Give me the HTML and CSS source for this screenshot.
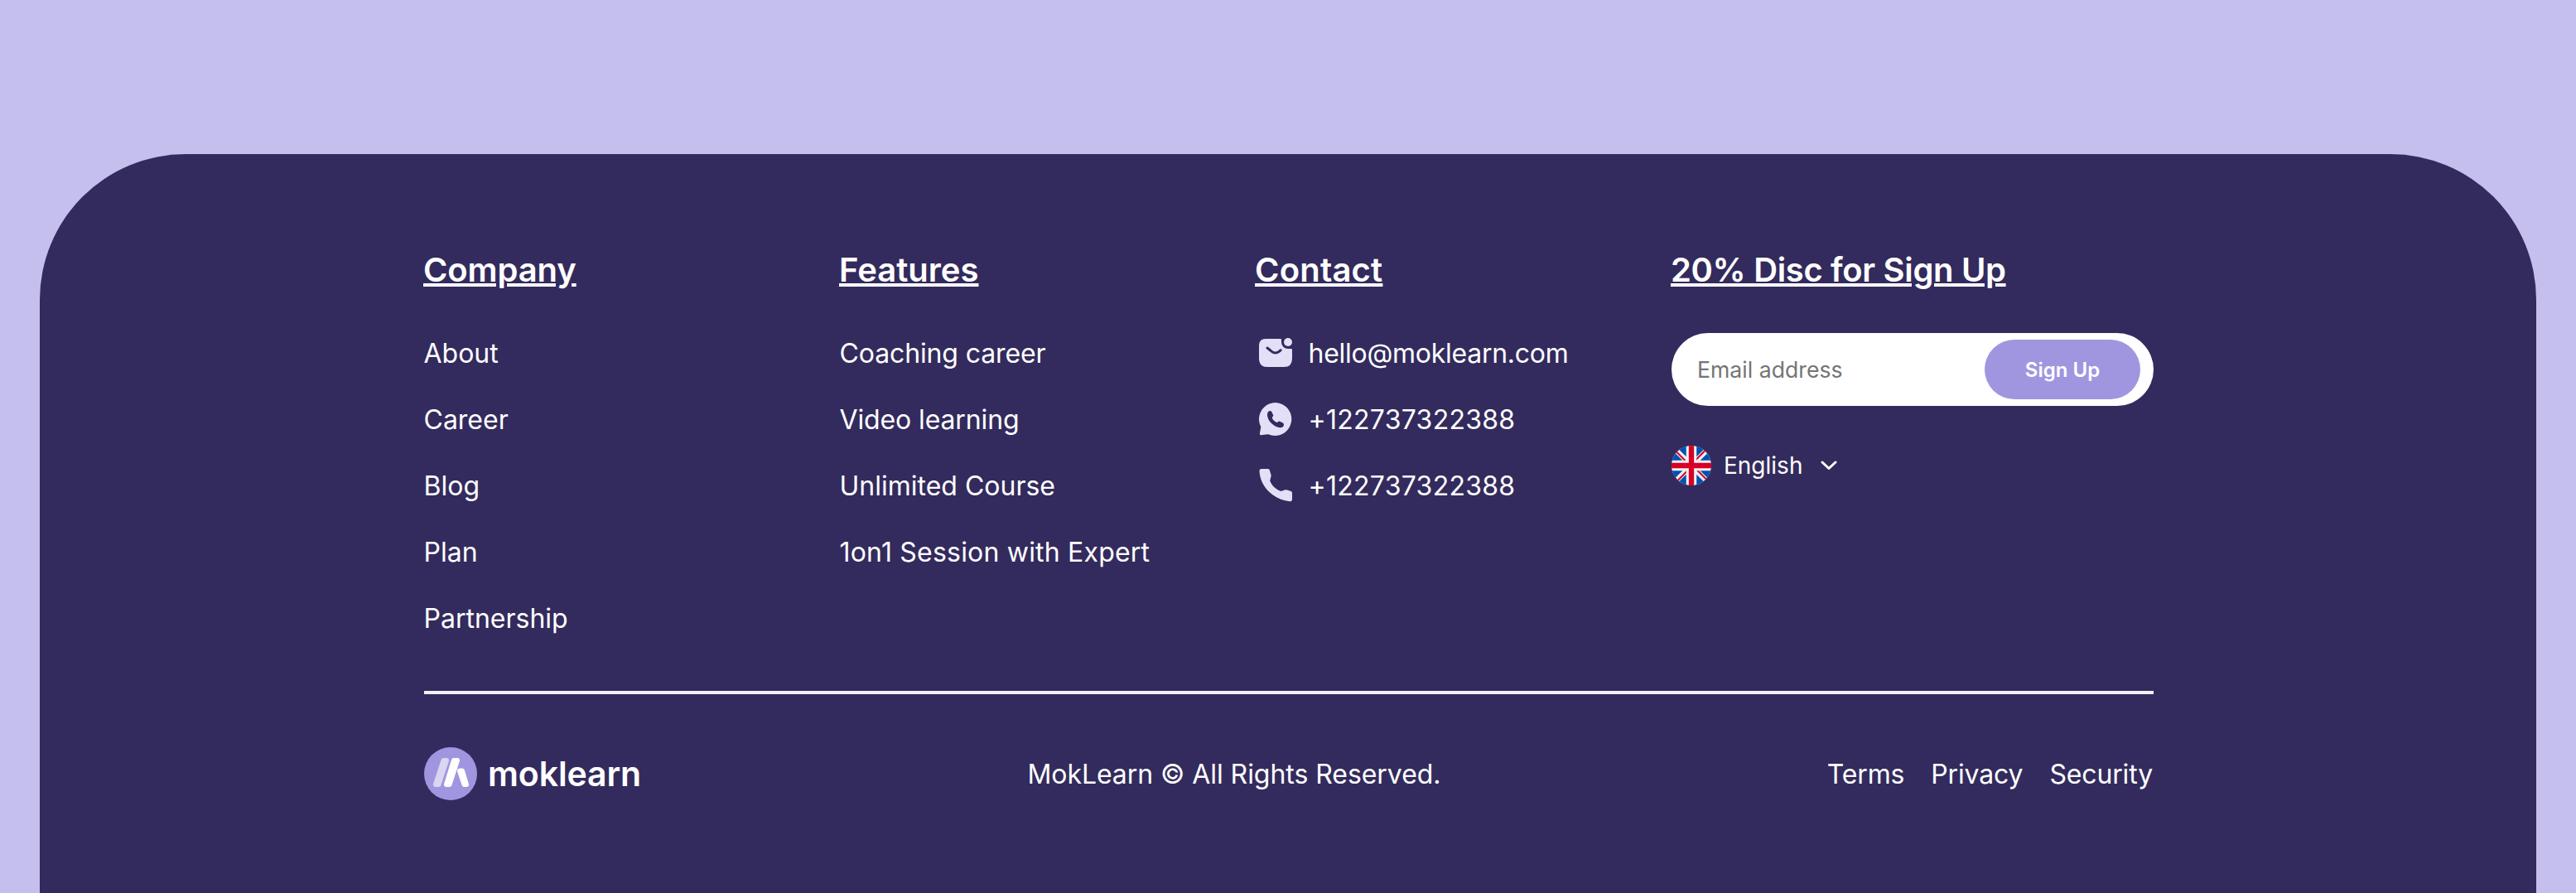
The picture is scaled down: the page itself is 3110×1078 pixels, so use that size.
FILE: index.html
```html
<!DOCTYPE html>
<html lang="en">
<head>
<meta charset="utf-8">
<title>moklearn</title>
<link rel="stylesheet" href="styles.css">
</head>
<body>
<footer class="footer">
  <div class="container">
    <div class="columns">
      <section>
        <h2 class="heading snug">Company</h2>
        <ul class="links">
          <li>About</li>
          <li>Career</li>
          <li>Blog</li>
          <li>Plan</li>
          <li>Partnership</li>
        </ul>
      </section>
      <section>
        <h2 class="heading">Features</h2>
        <ul class="links">
          <li class="snug">Coaching career</li>
          <li class="snug">Video learning</li>
          <li>Unlimited Course</li>
          <li class="loose">1on1 Session with Expert</li>
        </ul>
      </section>
      <section>
        <h2 class="heading loose">Contact</h2>
        <ul class="links">
          <li class="tight">
            <svg class="icon" viewBox="0 0 48 48"><path fill-rule="evenodd" d="M12 7H30.2Q31 7 31 8V11A8 8 0 0 0 39 19H42.6Q44 19 44 20V31Q44 41 34 41H14Q4 41 4 31V15Q4 7 12 7Z"/><circle cx="39" cy="11" r="5"/><path class="icon-cut" d="M14 18L19.8 22.7C21.9 24.4 25.7 24.4 27.8 22.7L30.2 20.8"/></svg>
            hello@moklearn.com
          </li>
          <li class="phone">
            <svg class="icon" viewBox="0 0 48 48"><path fill-rule="evenodd" d="M24 4a20 20 0 1 1-9 38.2L6.4 43.2Q4.6 43.4 4.9 41.6L6.3 33.3A20 20 0 0 1 24 4ZM14 18.4C14 15.6 15.6 14 17.4 14C18.7 14 19.2 14.8 19.7 16L21.1 19C21.7 20.3 20 21.1 19.8 22.4C20.8 24.8 22.8 26.9 25.5 28C26.8 27.9 27.5 26 28.8 26.5L32.3 28.3C33.4 28.8 34 29.4 34 30.5C34 32.6 32.3 34.2 29.8 34.2C22.5 34.2 14 26 14 18.4Z"/></svg>
            +122737322388
          </li>
          <li class="phone">
            <svg class="icon" viewBox="0 0 48 48"><path d="M7 4H15Q16.5 4 16.8 5.5L18.6 11.6Q18.8 12.6 18.3 14L17.2 18.2C18.7 23 24 29 30.4 30.9L35 29.4Q36.5 29 38 29.5L42.6 31Q44 31.5 44 33V40.5Q44 43.6 41 43.3C21 41.2 5.500 25.500 4.500 7Q4.400 4 7 4Z"/></svg>
            +122737322388
          </li>
        </ul>
      </section>
      <section>
        <h2 class="heading tighter">20% Disc for Sign Up</h2>
        <form class="signup">
          <input class="signup-input" type="email" placeholder="Email address">
          <button class="signup-button" type="button">Sign Up</button>
        </form>
        <div class="language">
          <svg class="flag" viewBox="0 0 512 512">
            <circle fill="#f0f0f0" cx="256" cy="256" r="256"/>
            <path fill="#0052b4" d="M52.920 100.142c-20.109 26.163-35.272 56.318-44.101 89.077h133.178zM503.181 189.219c-8.829-32.758-23.993-62.913-44.101-89.076l-89.075 89.076zM8.819 322.784c8.830 32.758 23.993 62.913 44.101 89.075l89.074-89.075zM411.858 52.921c-26.163-20.109-56.317-35.272-89.076-44.102v133.177zM100.142 459.079c26.163 20.109 56.318 35.272 89.076 44.102V370.005zM189.217 8.819c-32.758 8.830-62.913 23.993-89.075 44.101l89.075 89.075zM322.783 503.181c32.758-8.830 62.913-23.993 89.075-44.101l-89.075-89.075zM370.005 322.784l89.075 89.076c20.108-26.162 35.272-56.318 44.101-89.076z"/>
            <path fill="#d80027" d="M509.833 222.609H289.392V2.167a258 258 0 0 0-66.783 0v220.442H2.167a258 258 0 0 0 0 66.782h220.442v220.442a258 258 0 0 0 66.783 0V289.391h220.441a258 258 0 0 0 0-66.782zM322.783 322.784L437.019 437.020c5.254-5.252 10.266-10.743 15.048-16.435l-97.802-97.802zM189.217 322.784L74.980 437.019c5.252 5.254 10.743 10.266 16.435 15.048l97.802-97.804zM189.217 189.219L74.981 74.980c-5.254 5.252-10.266 10.743-15.048 16.435l97.803 97.803zM322.783 189.219L437.020 74.981c-5.252-5.254-10.743-10.266-16.435-15.047l-97.802 97.803z"/>
          </svg>
          <span>English</span>
          <svg class="chevron" viewBox="0 0 20 12"><path d="M2 2L10 9.500L18 2"/></svg>
        </div>
      </section>
    </div>
    <div class="bottom">
      <div class="brand">
        <svg class="brand-mark" viewBox="0 0 64 64">
          <circle cx="32" cy="32" r="32" fill="#a096e0"/>
          <path class="bar bar-soft" d="M23.500 16H27L17.500 45H14Z"/>
          <path class="bar" d="M36 16H40L30.500 45H27Z"/>
          <path class="bar" d="M43 28.500H46L51 45H48.500Z"/>
        </svg>
        <span class="brand-name">moklearn</span>
      </div>
      <p class="copyright">MokLearn © All Rights Reserved.</p>
      <ul class="legal">
        <li>Terms</li>
        <li>Privacy</li>
        <li>Security</li>
      </ul>
    </div>
  </div>
</footer>
</body>
</html>
```
FILE: styles.css
```css
* { box-sizing: border-box; }

body {
  margin: 0;
  padding: 186px 48px 0;
  background: #c5bfee;
  color: #fff;
  font-family: Inter, sans-serif;
  font-size: 32px;
  line-height: 48px;
}

ul, h2, p { margin: 0; padding: 0; }
ul { list-style: none; }

.footer {
  height: 892px;
  padding: 110px 462px 0 464px;
  background: #332b5d;
  border-radius: 176px 176px 0 0;
}

.container { width: 2088px; }

.columns {
  display: grid;
  grid-template-columns: 502px 502px 502px 582px;
  height: 542px;
  border-bottom: 4px solid #f3f1fc;
}

.heading {
  margin-left: -1px;
  font-size: 40px;
  font-weight: 600;
  line-height: 60px;
  text-decoration: underline;
}

.snug { letter-spacing: -0.12px; }
.tight { letter-spacing: -0.27px; }
.tighter { letter-spacing: -0.35px; }
.loose { letter-spacing: 0.2px; }
.phone { letter-spacing: 0.28px; }

.links {
  display: flex;
  flex-direction: column;
  gap: 32px;
  margin-left: -0.5px;
  padding-top: 47px;
}

.links li {
  display: flex;
  align-items: center;
  gap: 16px;
  height: 48px;
  white-space: nowrap;
}

.icon {
  width: 48px;
  height: 48px;
  margin: -1px 0 1px;
  fill: #e2dff7;
}

.icon-cut {
  fill: none;
  stroke: #332b5d;
  stroke-width: 3;
  stroke-linecap: round;
}

.signup {
  display: flex;
  align-items: center;
  justify-content: space-between;
  height: 88px;
  margin-top: 46px;
  padding: 0 16px 0 31px;
  background: #fff;
  border-radius: 44px;
}

.signup-input {
  width: 320px;
  padding: 0;
  border: 0;
  outline: 0;
  background: none;
  font: 26.67px Inter, sans-serif;
}

.signup-input::placeholder { color: #757575; }

.signup-button {
  width: 188px;
  height: 72px;
  padding: 0;
  border: 0;
  border-radius: 36px;
  background: #a096e0;
  color: #fff;
  font: 600 24px Inter, sans-serif;
}

.language {
  display: flex;
  align-items: center;
  height: 48px;
  margin-top: 48px;
  font-size: 28px;
}

.flag {
  width: 48px;
  height: 48px;
  margin-right: 15px;
}

.chevron {
  width: 20px;
  height: 12px;
  margin-left: 22px;
  fill: none;
  stroke: #fff;
  stroke-width: 3;
  stroke-linecap: round;
  stroke-linejoin: round;
}

.bottom {
  display: flex;
  align-items: center;
  justify-content: space-between;
  height: 64px;
  margin-top: 64px;
}

.brand {
  display: flex;
  align-items: center;
  gap: 13px;
}

.brand-mark { width: 64px; height: 64px; }

.bar {
  fill: #fff;
  stroke: #fff;
  stroke-width: 6;
  stroke-linejoin: round;
}

.bar-soft { opacity: 0.6; }

.brand-name {
  font-size: 41px;
  font-weight: 600;
  letter-spacing: -0.1px;
}

.copyright {
  padding-top: 1px;
  letter-spacing: -0.05px;
}

.legal {
  display: flex;
  gap: 32px;
  padding: 1px 1px 0 0;
  letter-spacing: -0.15px;
}
```
